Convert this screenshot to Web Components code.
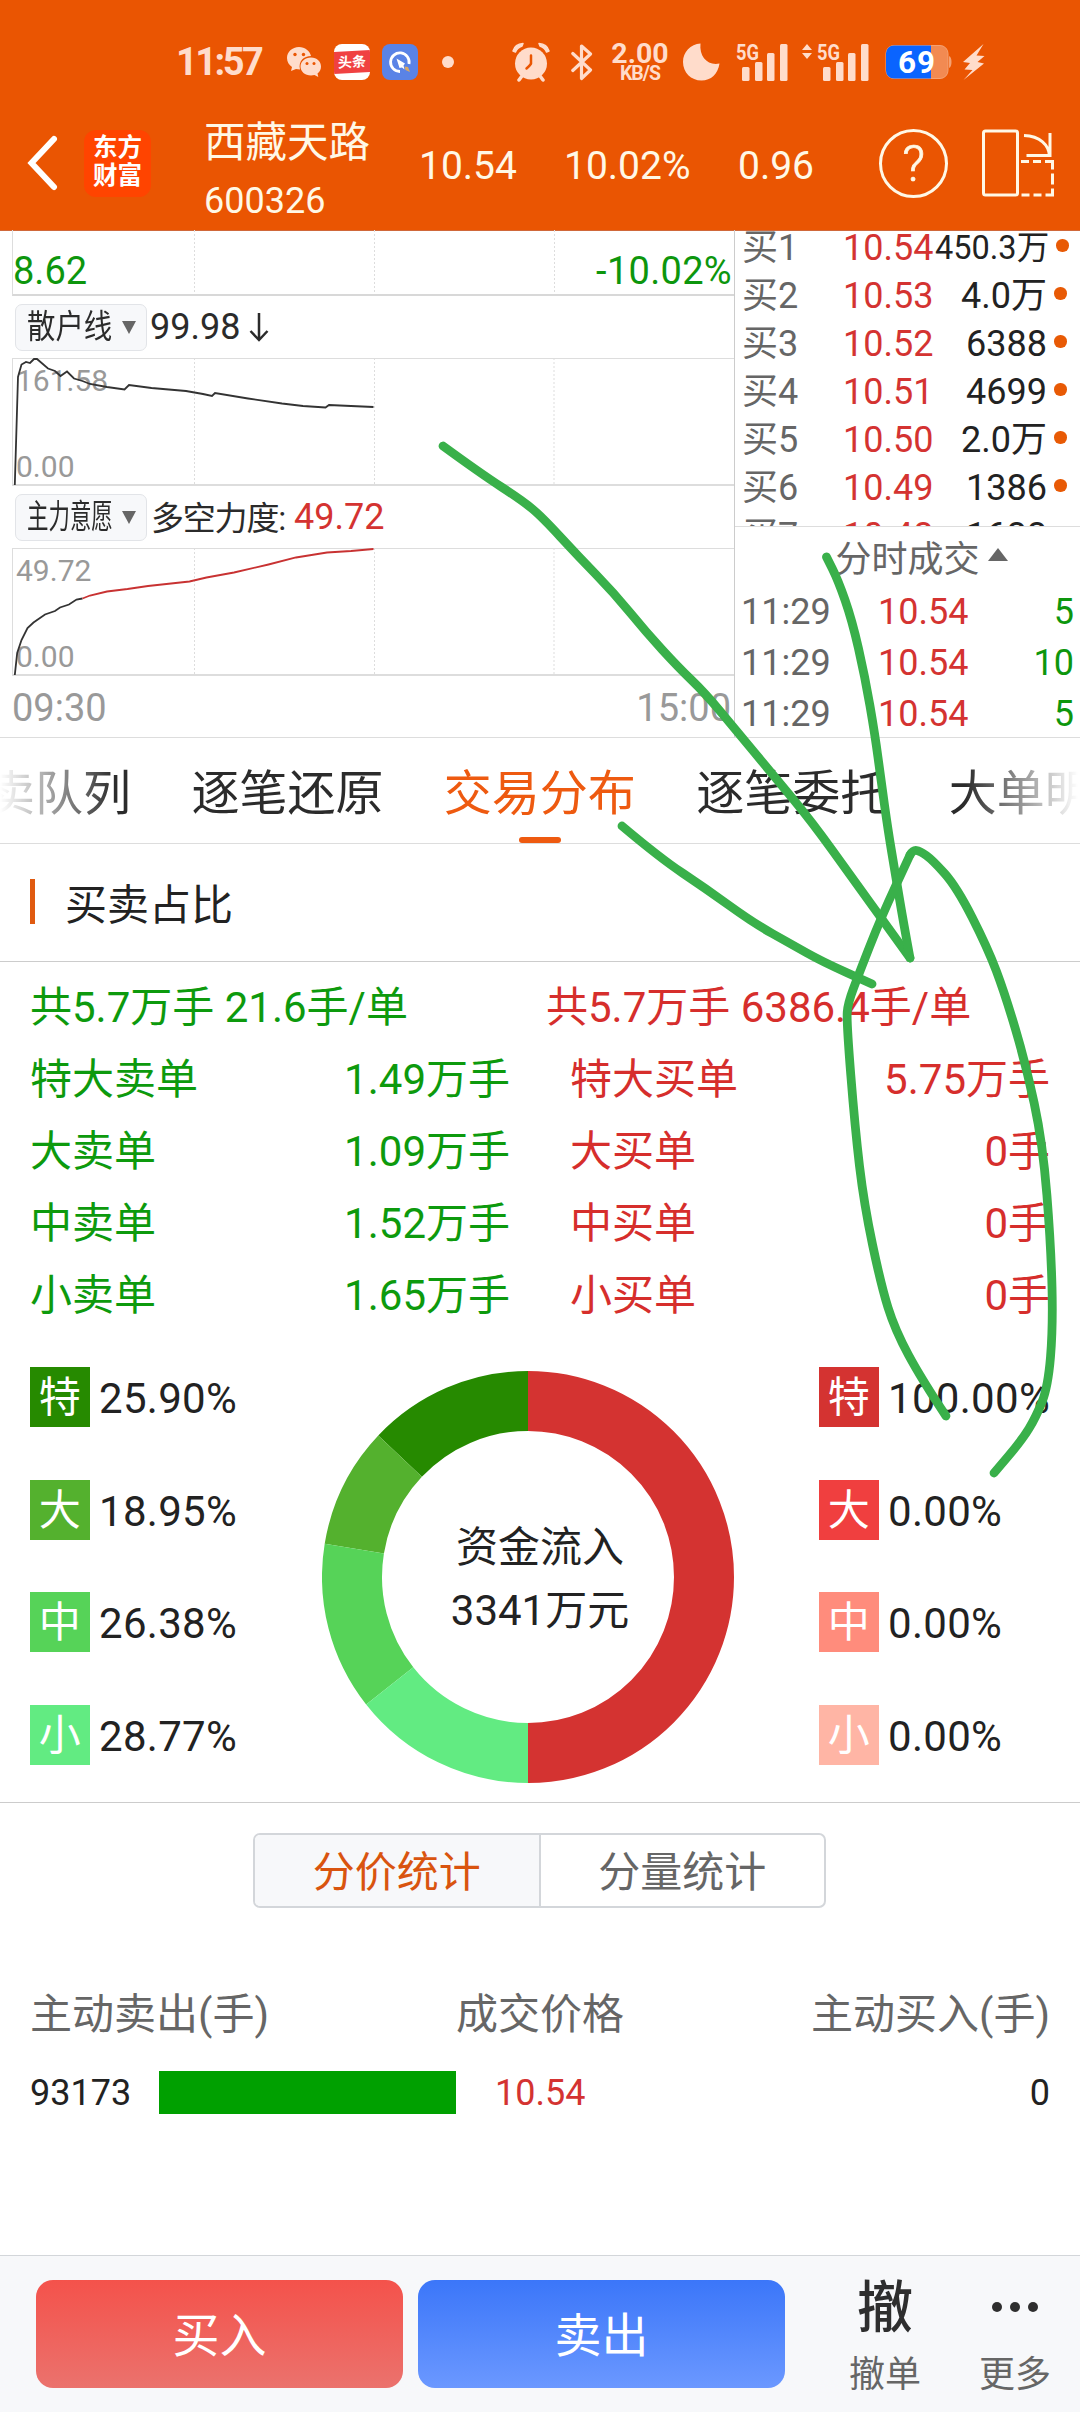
<!DOCTYPE html>
<html lang="zh-CN">
<head>
<meta charset="utf-8">
<title>西藏天路 600326</title>
<style>
  body {
    margin: 0;
    background: #fff;
    font-family: Roboto, "Noto Sans CJK SC", sans-serif;
    color: #222;
    width: 1080px;
    height: 2412px;
    overflow: hidden;
  }
</style>
</head>
<body>
<stock-page></stock-page>
<script>
const define = (name, html, after) => {
  const template = document.createElement('template');
  template.innerHTML = html;
  customElements.define(name, class extends HTMLElement {
    constructor() {
      super();
      this.attachShadow({ mode: 'open' }).appendChild(template.content.cloneNode(true));
    }
    connectedCallback() {
      if (after) after(this, this.shadowRoot);
    }
  });
};

define('status-bar', `
  <style>
    :host { display: flex; align-items: center; height: 69px; padding-top: 27px; color: #ffdccb; }
    svg { display: block; flex: none; }
    .time { width: 109px; margin-left: 176px; font-size: 38px; font-weight: 700; line-height: 38px; letter-spacing: -2.500px; }
    .app { margin-left: 12px; width: 36px; height: 36px; border-radius: 8px; overflow: hidden; }
    .toutiao { background: #fff; display: flex; align-items: center; }
    .toutiao span { width: 36px; height: 22px; background: #f04142; color: #fff; font-size: 14px; font-weight: 700; line-height: 22px; text-align: center; transform: skewY(-3deg); }
    .dot { width: 12px; height: 12px; border-radius: 50%; background: currentColor; margin-left: 24px; }
    .speed { width: 62px; margin-left: 16px; text-align: center; font-weight: 700; }
    .speed div { font-size: 28.500px; line-height: 21px; margin-top: 1px; }
    .speed div + div { font-size: 19.500px; line-height: 17px; letter-spacing: -1px; margin-top: 1px; }
  </style>
  <span class="time">11:57</span>
  <svg width="36" height="32" viewBox="0 0 36 32" style="margin-left:1px">
    <path fill="currentColor" d="M13 1C6 1 1 6 1 12c0 4 2 7 5 9l-1 4 5-2 4 .6C12 15 18 10 25 10 24 5 19 1 13 1z"/>
    <path fill="currentColor" d="M25 11.500c-6 0-10.500 4-10.500 9s4.500 9 10.500 9l3.500-.5 3.800 2-.8-3.500c2.500-1.800 3.500-4.300 3.500-7 0-5-4-9-10-9z"/>
    <g fill="#ea5502"><circle cx="9" cy="8.500" r="1.700"/><circle cx="17.500" cy="8.500" r="1.700"/><circle cx="21" cy="17.500" r="1.500"/><circle cx="28" cy="17.500" r="1.500"/></g>
  </svg>
  <div class="app toutiao"><span>头条</span></div>
  <svg class="app" viewBox="0 0 36 36">
    <rect width="36" height="36" fill="#5a83e6"/>
    <path d="M18 27.500A9.300 9.300 0 1 1 27 20" fill="none" stroke="#fff" stroke-width="2.800"/>
    <path d="M14.500 14.500l8.500 5-1.500 2 1 4-2.500-2-2.500.5z" fill="#fff"/>
    <path d="M22.500 22.500l3.500.5 2 5-4.500-2z" fill="#d9a866"/>
  </svg>
  <div class="dot"></div>
  <svg width="38" height="40" viewBox="0 0 38 40" style="margin-left:58px">
    <path d="M1 9Q3 2 11 1.500L10 4Q5 6 3.500 10zM37 9Q35 2 27 1.500L28 4Q33 6 34.500 10z" fill="currentColor" stroke="currentColor" stroke-width="1.500" stroke-linejoin="round"/>
    <circle cx="19" cy="21.500" r="16" fill="currentColor"/>
    <path d="M10 34l-3 4M28 34l3 4" stroke="currentColor" stroke-width="3.500" stroke-linecap="round"/>
    <path d="M19 13.500v8q-.5 1.500-4.500 5" fill="none" stroke="#ea5502" stroke-width="2.500" stroke-linecap="round"/>
  </svg>
  <svg width="22" height="38" viewBox="0 0 22 38" style="margin-left:21px">
    <path d="M1.800 10.500L19.500 27 10.500 35.500V3L19.500 11 1.800 27.500" fill="none" stroke="currentColor" stroke-width="3.200" stroke-linejoin="round" stroke-linecap="round"/>
  </svg>
  <div class="speed"><div>2.00</div><div>KB/S</div></div>
  <svg width="38" height="38" viewBox="0 0 38 38" style="margin-left:11px">
    <path d="M18.500.5C17 14 26 23 37.500 20.500 36 31 29 37.500 19.500 37.500 9 37.500 1 29.500 1 19 1 9 8.500 1 18.500.5z" fill="currentColor"/>
  </svg>
  <svg width="53" height="38" viewBox="0 0 53 38" style="margin-left:16px" fill="currentColor">
    <text x="0" y="16.500" font-size="22" font-weight="700" textLength="23" lengthAdjust="spacingAndGlyphs">5G</text>
    <rect x="6" y="24" width="7.500" height="14" rx="1.500"/><rect x="19" y="19" width="7.500" height="19" rx="1.500"/>
    <rect x="31" y="10" width="7.500" height="28" rx="1.500"/><rect x="44" y="1" width="7.500" height="37" rx="1.500"/>
  </svg>
  <svg width="67" height="38" viewBox="0 0 67 38" style="margin-left:13px" fill="currentColor">
    <path d="M0 7l5-6 5 6zM0 10l5 6 5-6z"/>
    <text x="15" y="16.500" font-size="22" font-weight="700" textLength="23" lengthAdjust="spacingAndGlyphs">5G</text>
    <rect x="21" y="24" width="7.500" height="14" rx="1.500"/><rect x="34" y="19" width="7.500" height="19" rx="1.500"/>
    <rect x="46" y="10" width="7.500" height="28" rx="1.500"/><rect x="59" y="1" width="7.500" height="37" rx="1.500"/>
  </svg>
  <svg width="67" height="36" viewBox="0 0 67 36" style="margin-left:16px">
    <rect x="1" y="1.500" width="62" height="33" rx="8" fill="#f28a52" stroke="#f5a172"/>
    <path d="M64 12q2.500 1 2.500 6t-2.500 6z" fill="#f5a172"/>
    <path d="M9 1.500h37v33H9a8 8 0 0 1-8-8v-17a8 8 0 0 1 8-8z" fill="#0a64ff"/>
    <text x="13" y="29" font-size="31.500" font-weight="700" fill="#fff" textLength="37">69</text>
  </svg>
  <svg width="24" height="38" viewBox="0 0 24 38" style="margin-left:10px">
    <path d="M21.500 1L1 19l7 1-5.500 6.500 8 .5L1.500 37 22 20.500l-6.500-1.500 7-6-8-.5z" fill="currentColor"/>
  </svg>
`);

define('nav-bar', `
  <style>
    :host { display: flex; align-items: center; height: 134px; color: #fff8e6; }
    .back { margin-left: 24px; }
    svg { flex: none; display: block; }
    .logo { flex: none; margin-left: 26px; width: 67px; height: 67px; border-radius: 12px; background: #ff4400; color: #fff; font-weight: 700; font-size: 24.500px; line-height: 28.500px; text-align: center; box-sizing: border-box; padding-top: 4px; }
    .name { flex: none; width: 215px; margin-left: 53px; font-size: 41.500px; line-height: 58px; padding-top: 17px; }
    .name small { display: block; font-size: 36px; line-height: 58px; }
    .num { flex: none; font-size: 39px; padding-top: 5px; }
    .help { flex: none; width: 63px; height: 63px; border: 3px solid; border-radius: 50%; margin-left: 63px; font-size: 50px; line-height: 65px; text-align: center; font-weight: 300; -webkit-text-stroke: .7px; }
  </style>
  <svg class="back" width="34" height="60" viewBox="0 0 34 60"><path d="M30 6L7.500 30 30 54" fill="none" stroke="#fff" stroke-width="6" stroke-linecap="round"/></svg>
  <div class="logo">东方<br>财富</div>
  <div class="name">西藏天路<small>600326</small></div>
  <span class="num" style="width:145px">10.54</span>
  <span class="num" style="width:174px">10.02%</span>
  <span class="num" style="width:78px">0.96</span>
  <div class="help">?</div>
  <svg width="76" height="70" viewBox="0 0 76 70" style="margin-left:32px" fill="none" stroke="currentColor" stroke-width="3">
    <rect x="3.500" y="3" width="34" height="64" rx="2"/>
    <path d="M44 7.500C60 8 69 17 69.500 28M70 5v22.500M46.500 27.500h25"/>
    <path d="M41 33.500h8m4 0h8m4 0h7.500v8m0 4v11m0 4v6.500h-7m-4 0h-8m-4 0h-8"/>
  </svg>
`);

define('drop-pill', `
  <style>
    :host { display: flex; align-items: center; box-sizing: border-box; width: 132px; height: 47px; border: 1.500px solid #e2e4e8; border-radius: 7px; background: #f7f8fa; padding-left: 11px; }
    .t { width: 86px; font-size: 33px; line-height: 44px; white-space: nowrap; }
    .t span { display: inline-block; transform-origin: 0 50%; transform: scaleX(var(--sx)); }
    i { margin-left: 9px; border: 7.500px solid transparent; border-top: 13px solid #666; border-bottom: 0; }
  </style>
  <div class="t"><span><slot></slot></span></div><i></i>
`);

// one grid box of the minute chart: the lines are slotted svg, the labels are attributes
define('chart-box', `
  <style>
    :host { display: flex; flex-direction: column; justify-content: space-between; box-sizing: border-box; height: 128px; padding: 5px 0 0 3px; margin-left: 12px; position: relative;
      border-left: 1.500px solid #ddd; border-top: 1px solid #ddd; border-bottom: 2px solid #ddd; }
    svg, ::slotted(svg) { position: absolute; left: -1px; top: -1px; z-index: 1; }
    span { font-size: 30px; line-height: 34px; color: #999; }
  </style>
  <svg width="722" height="127" stroke="#ddd" stroke-dasharray="2 2"><path d="M182.500 0v127M362.500 0v127M542 0v127"/></svg>
  <slot></slot>
  <span class="top"></span><span class="bot"></span>
`, (el, root) => {
  root.querySelector('.top').textContent = el.getAttribute('max');
  root.querySelector('.bot').textContent = el.getAttribute('min');
});

define('minute-chart', `
  <style>
    :host { display: block; width: 734px; height: 507px; flex: none; }
    .price { box-sizing: border-box; height: 66px; margin-left: 12px; border-left: 1.500px solid #ddd; border-bottom: 2px solid #d8d8d8; display: flex; justify-content: space-between; color: #0d960d; font-size: 38px; line-height: 44px; padding: 19px 2px 0 0;
      background: repeating-linear-gradient(#ddd 0 2px, #fff 2px 4px) 181px 0 / 1px 100% no-repeat, repeating-linear-gradient(#ddd 0 2px, #fff 2px 4px) 361px 0 / 1px 100% no-repeat, repeating-linear-gradient(#ddd 0 2px, #fff 2px 4px) 541px 0 / 1px 100% no-repeat; }
    .price span + span { letter-spacing: .3px; }
    .bar { display: flex; align-items: center; height: 62px; padding-left: 15px; font-size: 36px; color: #2b2b2b; }
    .bar b { font-weight: 400; margin-left: 3px; }
    .cn { font-size: 33px; letter-spacing: -1.200px; margin: -3px 0 0 4px; }
    .red { color: #d43331; margin-left: 9px; }
    .axis { display: flex; justify-content: space-between; font-size: 38px; line-height: 44px; color: #999; padding: 10px 3px 0 12px; }
  </style>
  <div class="price"><span>8.62</span><span>-10.02%</span></div>
  <div class="bar"><drop-pill style="--sx:.86">散户线</drop-pill><b>99.98</b>
    <svg width="20" height="32" viewBox="0 0 20 32" style="margin-left:9px" fill="none" stroke="#2b2b2b" stroke-width="2.500"><path d="M10 2v27M1.500 20l8.500 9 8.500-9"/></svg>
  </div>
  <chart-box max="161.58" min="0.00">
    <svg width="722" height="128" fill="none" stroke="#333" stroke-width="1.800"><path d="M2.800 127L6 19 9.500 6.500 14 4l4 1 4-4h3l11 9.500 7 2.500 5.500 5 6.500-4.500 7 7 8.500 2.500 7.500 3 17 3 17.500 2.500 4.500-4.500 22.500 3 34.500 3 17 3 9 2 3-3 33 5.500 34 5 21 2.500 22.500 1.500 3.500-2.500 22 1 22.500 1"/></svg>
  </chart-box>
  <div class="bar"><drop-pill style="--sx:.65">主力意愿</drop-pill><span class="cn">多空力度:</span><span class="red">49.72</span></div>
  <chart-box max="49.72" min="0.00">
    <svg width="722" height="128" fill="none" stroke-width="1.800"><path stroke="#333" d="M2.800 127L5.200 105 9.500 92l6-12 6-5.500 11.500-8 10-3.500 5-3.500 9-3 7.500-5 6-1"/><path stroke="#c83232" d="M70.500 50.500l7.500-3 17-4 20.500-2.500 20.500-3 41.500-4.500 17-4 27.500-5 34.500-8 27.500-7 31-5 24-1.500 22.500-2"/></svg>
  </chart-box>
  <div class="axis"><span>09:30</span><span>15:00</span></div>
`);

define('order-book', `
  <style>
    :host { display: flex; flex-direction: column; box-sizing: border-box; width: 346px; height: 507px; border-left: 1.500px solid #ccc; color: #666; font-size: 36px; }
    .bids { height: 297px; overflow: hidden; border-bottom: 1px solid #ddd; box-sizing: border-box; flex: none; }
    .bid { display: grid; grid-template-columns: 101px 92px 1fr 13px; height: 48px; line-height: 48px; padding: 0 12px 0 7px; white-space: nowrap; }
    .bids .bid:first-child { margin-top: -6px; }
    .bid .price, .trade .price { color: #d43331; }
    .bid .vol { display: flex; justify-content: flex-end; color: #222; padding-right: 8px; }
    .bid i { width: 12.500px; height: 12.500px; border-radius: 50%; background: #e85a05; margin: 15px 0 0 -1px; }
    .head { display: flex; align-items: center; justify-content: center; flex: none; height: 58px; margin-left: 28px; }
    .head i { margin-left: 8px; border: 10.500px solid transparent; border-bottom: 13px solid #666; border-top: 0; margin-bottom: 4px; }
    .trades { flex: none; margin-top: 2px; height: 150px; }
    .trade { display: grid; grid-template-columns: 137px 1fr auto; height: 51px; line-height: 51px; padding: 0 6px 0 6px; }
    .trade .n { color: #0d960d; }
  </style>
  <div class="bids"></div>
  <div class="head">分时成交<i></i></div>
  <div class="trades"></div>
`, (el, root) => {
  const bids = [['10.54', '450.3万'], ['10.53', '4.0万'], ['10.52', '6388'], ['10.51', '4699'], ['10.50', '2.0万'], ['10.49', '1386'], ['10.48', '1688']];
  root.querySelector('.bids').innerHTML = bids.map(([price, vol], i) =>
    `<div class="bid"><span>买${i + 1}</span><span class="price">${price}</span><span class="vol"${i ? '' : ' style="font-size:32.500px"'}>${vol}</span><i></i></div>`).join('');
  root.querySelector('.trades').innerHTML = [5, 10, 5].map((n) =>
    `<div class="trade"><span>11:29</span><span class="price">10.54</span><span class="n">${n}</span></div>`).join('');
});

define('tab-strip', `
  <style>
    :host { display: block; box-sizing: border-box; height: 107px; border-top: 1.500px solid #ddd; border-bottom: 1.500px solid #ddd; overflow: hidden; }
    .row { display: flex; gap: 60.400px; margin-left: -61px; font-size: 48px; line-height: 112px; height: 105px; white-space: nowrap; color: #2b2b2b; width: 1300px; }
    .wrap { -webkit-mask-image: linear-gradient(90deg, transparent, #000 115px, #000 965px, transparent 1078px); }
    .on { color: #ee5a10; display: flex; flex-direction: column; align-items: center; }
    .on::after { content: ""; width: 42px; height: 6px; border-radius: 3px; background: #ee5a10; margin-top: -13.500px; }
  </style>
  <div class="wrap"><div class="row"><span>买卖队列</span><span>逐笔还原</span><span class="on">交易分布</span><span>逐笔委托</span><span>大单明细</span></div></div>
`);

define('section-title', `
  <style>
    :host { display: flex; align-items: center; box-sizing: border-box; height: 118px; padding: 0 0 3px 30px; border-bottom: 1px solid #ccc; font-size: 42px; color: #222; }
    i { width: 5px; height: 45px; background: #e05a10; margin-right: 30px; }
  </style>
  <i></i><slot></slot>
`);

define('order-totals', `
  <style>
    :host { display: block; width: 480px; font-size: 42px; line-height: 72px; white-space: nowrap; }
    .row { display: flex; justify-content: space-between; }
    .total { margin-left: var(--shift, 0); }
  </style>
  <div class="total"><slot></slot></div>
`, (el, root) => {
  const side = el.getAttribute('side');
  el.getAttribute('values').split(',').forEach((v, i) => {
    const row = document.createElement('div');
    row.className = 'row';
    row.innerHTML = `<span>${['特大', '大', '中', '小'][i]}${side}单</span><span>${v}手</span>`;
    root.appendChild(row);
  });
});

define('share-legend', `
  <style>
    :host { display: flex; flex: none; flex-direction: column; gap: 52.700px; font-size: 42px; letter-spacing: .3px; color: #222; }
    div { display: flex; height: 60px; line-height: 63px; }
    b { width: 60px; height: 60px; line-height: 62px; color: #fff; font-weight: 400; text-align: center; margin-right: 9px; }
  </style>
`, (el, root) => {
  const colors = el.getAttribute('colors').split(',');
  el.getAttribute('values').split(',').forEach((v, i) => {
    const row = document.createElement('div');
    row.innerHTML = `<b style="background:${colors[i]}">${'特大中小'[i]}</b>${v}`;
    root.appendChild(row);
  });
});

define('flow-donut', `
  <style>
    :host { display: grid; flex: none; width: 412px; height: 412px; }
    svg, div { grid-area: 1 / 1; }
    div { align-self: center; text-align: center; font-size: 42px; line-height: 63px; color: #222; padding-left: 24px; margin-top: 4px; }
  </style>
  <svg width="412" height="412" viewBox="0 0 412 412" fill="none" stroke-width="60"></svg>
  <div>资金流入<br>3341万元</div>
`, (el, root) => {
  const point = (a) => `${206 + 176 * Math.sin(a)} ${206 - 176 * Math.cos(a)}`;
  const arc = (from, to, color) => `<path d="M${point(from)}A176 176 0 0 1 ${point(to)}" stroke="${color}"/>`;
  let angle = Math.PI * 2;
  let paths = arc(0, Math.PI, '#d43331');
  [[.2590, '#268a00'], [.1895, '#54b12e'], [.2638, '#56d358'], [.2877, '#62eb82']].forEach(([share, color]) => {
    paths += arc(angle - share * Math.PI, angle, color);
    angle -= share * Math.PI;
  });
  root.querySelector('svg').innerHTML = paths;
});

define('segment-switch', `
  <style>
    :host { display: flex; box-sizing: border-box; width: 573px; height: 75px; margin: 30px 0 0 253px; border: 2px solid #d3d6da; border-radius: 7px; overflow: hidden; font-size: 42px; line-height: 76px; text-align: center; color: #666; }
    span { flex: 1; }
    .on { background: #f7f8fa; color: #d9540f; border-right: 2px solid #d3d6da; }
  </style>
  <span class="on">分价统计</span><span>分量统计</span>
`);

define('price-table', `
  <style>
    :host { display: block; margin-top: 75px; height: 272px; padding: 0 30px; color: #666; font-size: 42px; }
    .head { display: grid; grid-template-columns: 1fr auto 1fr; line-height: 64px; }
    .head :last-child { text-align: right; }
    .row { display: grid; grid-template-columns: 129px 297px 1fr auto; align-items: center; margin-top: 24px; height: 43px; font-size: 36px; color: #222; }
    .row i { height: 43px; background: #00a000; }
    .row .p { color: #d43331; padding-left: 39px; }
  </style>
  <div class="head"><span>主动卖出(手)</span><span>成交价格</span><span>主动买入(手)</span></div>
  <div class="row"><span>93173</span><i></i><span class="p">10.54</span><span>0</span></div>
`);

define('trade-bar', `
  <style>
    :host { display: flex; box-sizing: border-box; height: 157px; border-top: 1.500px solid #d3d6da; background: #f7f8fa; padding: 24px 0 0 36px; }
    .btn { flex: none; width: 367px; height: 108px; margin-right: 15px; border-radius: 17px; color: #fff; font-size: 47px; line-height: 112px; text-align: center; }
    .buy { background: linear-gradient(#f4524b, #eb726d); }
    .sell { background: linear-gradient(#3b76f9, #6b98ff); }
    .tool { flex: none; width: 72px; margin-left: 49px; text-align: center; font-size: 36px; line-height: 44px; color: #666; }
    .tool + .tool { margin-left: 58px; }
    .big { font-size: 56px; font-weight: 500; height: 73px; line-height: 56px; color: #2e2e2e; }
    svg { display: block; height: 73px; }
  </style>
  <div class="btn buy">买入</div>
  <div class="btn sell">卖出</div>
  <div class="tool"><div class="big">撤</div>撤单</div>
  <div class="tool"><svg width="72" height="73" fill="#2e2e2e"><circle cx="18" cy="27" r="5"/><circle cx="36" cy="27" r="5"/><circle cx="54" cy="27" r="5"/></svg>更多</div>
`);

// free-hand marker strokes that lie over the whole page
define('pen-marks', `
  <style>
    :host { position: absolute; left: 0; top: 0; z-index: 5; pointer-events: none; }
    svg { display: block; }
  </style>
  <svg width="1080" height="2412" fill="none" stroke="#39b04a" stroke-width="8.800" stroke-linecap="round" stroke-linejoin="round"></svg>
`, (el, root) => {
  const strokes = [
    [443, 446, 480, 473, 523, 501, 542, 517, 578, 556, 614, 593, 646, 632, 678, 667, 705, 693, 735, 729, 774, 776, 812, 822, 853, 879, 910, 958],
    [910, 958, 903, 920, 895, 872, 888, 830, 881, 780, 875, 735, 865, 677, 852, 620, 838, 580, 826.5, 557],
    [622, 826, 660, 858, 705, 888, 753.5, 923, 791, 944, 822, 961.5, 872, 984],
    [946, 1416, 922, 1380, 895, 1330, 881, 1285, 864, 1204, 855, 1128, 846.5, 1021, 848, 1003, 858.5, 975, 881, 917.5, 910, 855],
    [910, 855, 913, 850, 920, 851, 932.6, 860, 956.7, 887, 987.7, 948, 1005, 994, 1025.5, 1063, 1042.8, 1143, 1051, 1247, 1053, 1327, 1048, 1387, 1036, 1417, 1022, 1440, 994, 1473],
  ];
  root.querySelector('svg').innerHTML = strokes.map((p) => {
    let d = `M${p[0]} ${p[1]}`;
    for (let i = 2; i < p.length - 2; i += 2) {
      d += `Q${p[i]} ${p[i + 1]} ${(p[i] + p[i + 2]) / 2} ${(p[i + 1] + p[i + 3]) / 2}`;
    }
    return `<path d="${d}L${p[p.length - 2]} ${p[p.length - 1]}"/>`;
  }).join('');
});

define('stock-page', `
  <style>
    :host { display: block; width: 1080px; height: 2412px; overflow: hidden; position: relative; }
    header { background: #ea5502; height: 230px; border-bottom: 1px solid #d0683a; }
    .quote { display: flex; height: 507px; margin-top: -1px; }
    .totals { display: flex; gap: 60px; padding: 10px 30px 0; height: 396px; box-sizing: border-box; }
    .sell { color: #0d9a0d; }
    .buy { color: #d62e2c; --shift: -24px; }
    .shares { display: flex; box-sizing: border-box; height: 445px; padding: 9px 0 0 30px; border-bottom: 1.500px solid #ccc; }
    .shares share-legend:first-child { width: 292px; }
    flow-donut { margin: 4px 85px 0 0; }
  </style>
  <header><status-bar></status-bar><nav-bar></nav-bar></header>
  <div class="quote"><minute-chart></minute-chart><order-book></order-book></div>
  <tab-strip></tab-strip>
  <section-title>买卖占比</section-title>
  <div class="totals">
    <order-totals class="sell" side="卖" values="1.49万,1.09万,1.52万,1.65万">共5.7万手 21.6手/单</order-totals>
    <order-totals class="buy" side="买" values="5.75万,0,0,0">共5.7万手 6386.4手/单</order-totals>
  </div>
  <div class="shares">
    <share-legend colors="#268a00,#54b12e,#56d358,#62eb82" values="25.90%,18.95%,26.38%,28.77%"></share-legend>
    <flow-donut></flow-donut>
    <share-legend colors="#d43331,#f03f3f,#ff8c7c,#ffb5a5" values="100.00%,0.00%,0.00%,0.00%"></share-legend>
  </div>
  <segment-switch></segment-switch>
  <price-table></price-table>
  <trade-bar></trade-bar>
  <pen-marks></pen-marks>
`);
</script>
</body>
</html>
